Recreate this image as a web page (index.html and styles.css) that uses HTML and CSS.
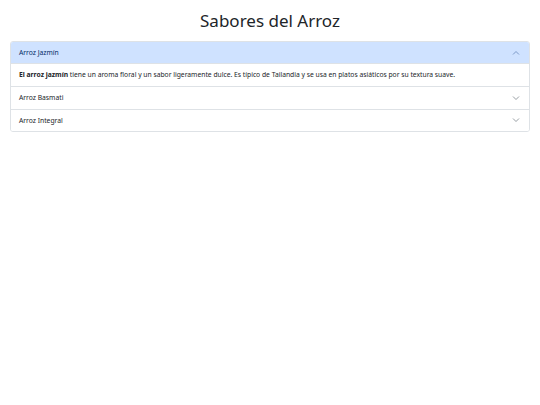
FILE: index.html
```html
<!DOCTYPE html>
<html lang="es">
<head>
<meta charset="utf-8">
<link rel="stylesheet" href="styles.css">
</head>
<body>
<div class="page">
  <h1 class="title">Sabores del Arroz</h1>
  <div class="accordion">
    <div class="item">
      <button class="header active">Arroz Jazmín
        <svg class="chev" viewBox="0 0 16 16" width="8" height="8"><path d="M2 11 L8 5 L14 11" fill="none" stroke="currentColor" stroke-width="1.4"/></svg>
      </button>
      <div class="body"><p><strong>El arroz jazmín</strong> tiene un aroma floral y un sabor ligeramente dulce. Es típico de Tailandia y se usa en platos asiáticos por su textura suave.</p></div>
    </div>
    <div class="item">
      <button class="header">Arroz Basmati
        <svg class="chev" viewBox="0 0 16 16" width="8" height="8"><path d="M2 5 L8 11 L14 5" fill="none" stroke="currentColor" stroke-width="1.4"/></svg>
      </button>
    </div>
    <div class="item">
      <button class="header">Arroz Integral
        <svg class="chev" viewBox="0 0 16 16" width="8" height="8"><path d="M2 5 L8 11 L14 5" fill="none" stroke="currentColor" stroke-width="1.4"/></svg>
      </button>
    </div>
  </div>
</div>
</body>
</html>
```
FILE: styles.css
```css
html, body { margin: 0; padding: 0; background: #fff; }
body { font-family: "Noto Sans", "Open Sans", sans-serif; color: #212529; }
.page { padding: 10px 10px; }
.title {
  margin: 0 0 10px;
  text-align: center;
  font-weight: 400;
  font-size: 17px;
  line-height: 21px;
  color: #212529;
}
.accordion {
  border: 1px solid #dee2e6;
  border-radius: 3px;
  overflow: hidden;
}
.item + .item { border-top: 1px solid #dee2e6; }
.header {
  display: flex;
  align-items: center;
  justify-content: space-between;
  width: 100%;
  height: 21.5px;
  padding: 0 9px 0 8px;
  border: 0;
  background: #fff;
  font-family: inherit;
  font-size: 6.75px;
  color: #212529;
  text-align: left;
}
.header.active {
  background: #cfe2ff;
  color: #052c65;
  box-shadow: inset 0 -1px 0 #dee2e6;
}
.chev { color: #6c757d; }
.header.active .chev { color: #5a7bb0; }
.body {
  padding: 0 8px;
  height: 22.5px;
  display: flex;
  align-items: center;
  font-size: 6.75px;
}
.body p { margin: 0; }
.body strong { font-weight: 700; }
```
